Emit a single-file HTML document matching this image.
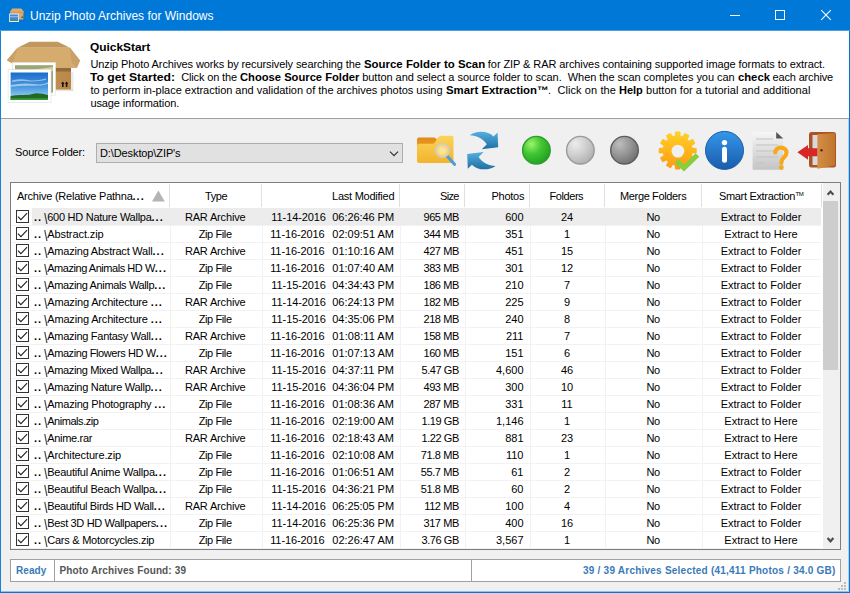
<!DOCTYPE html>
<html><head><meta charset="utf-8"><title>Unzip Photo Archives for Windows</title>
<style>
*{box-sizing:border-box;margin:0;padding:0}
html,body{width:850px;height:593px;overflow:hidden;background:#f0f0f0}
body{position:relative;font-family:"Liberation Sans","DejaVu Sans",sans-serif;font-size:11px;color:#000}
.abs{position:absolute}
#win{position:absolute;left:0;top:0;width:850px;height:593px;background:#f0f0f0;border-left:1px solid #1a80d6;border-right:1px solid #0078d7;border-bottom:1px solid #0078d7}
#win:after{content:"";position:absolute;right:0;top:31px;width:1px;height:561px;background:#a9d2f2}
#win:before{content:"";position:absolute;left:0;bottom:0;width:848px;height:1px;background:#8cc3ee}
#title{position:absolute;left:0;top:0;width:850px;height:31px;background:#0078d7;border-bottom:1px solid #4d9fe2}
#title .t{position:absolute;left:30px;top:9px;font-size:12px;color:#fff;white-space:pre;line-height:14px}
#qs{position:absolute;left:1px;top:31px;width:848px;height:88px;background:#fff;border-bottom:1px solid #a0a0a0}
#qs .h{position:absolute;left:89px;top:10px;font-weight:bold;font-size:11px;line-height:13px;white-space:pre}
#qs .l{position:absolute;left:89.400px;font-size:11px;line-height:13px;white-space:pre}
#qs .l span,#qs .l b{display:inline-block;white-space:pre}
#lbl{position:absolute;left:15px;top:146px;line-height:13px;white-space:pre}
#combo{position:absolute;left:96px;top:143px;width:307px;height:20px;border:1px solid #adadad;background:#e1e1e1}
#combo span{position:absolute;left:3px;top:3px;line-height:13px;white-space:pre}
#combo svg{position:absolute;left:292px;top:6.500px}
#tbl{position:absolute;left:10px;top:182px;width:831px;height:368px;border:1px solid #7b7d82;background:#fff}
#hdr{position:absolute;left:11px;top:183px;width:810px;height:25px;background:#fff}
#hdr span{position:absolute;top:7px;line-height:13px;white-space:pre}
#hdr i{position:absolute;top:1px;width:1px;height:23px;background:#e0e0e0}
#hdr u{position:absolute;top:25px;width:1px;height:340px;background:#f2f2f2}
.row{position:absolute;left:11px;width:810px;height:17px;white-space:pre;line-height:13px}
.row:after{content:"";position:absolute;left:0;top:17px;width:810px;height:1px;background:#f2f2f2}
.row.sel:before{content:"";position:absolute;left:21px;top:0;width:789px;height:17px;background:#ececec}
.row>span{position:absolute;top:3px}
.row span span{display:inline-block;white-space:pre}
.row .d{letter-spacing:1px;font-weight:bold}
.row .bs{width:5.100px;text-align:right;transform:translateY(0.8px) scaleY(1.4);transform-origin:50% 5.5px}
.cb{position:absolute;left:5px;top:2px;width:13px;height:13px;border:1px solid #333;background:#fff}
.cb svg{position:absolute;left:-1px;top:-1px;width:13px;height:13px}
.cb path{fill:none;stroke:#222;stroke-width:1.1}
.c1{left:23px}
.c2{left:158.700px;width:91px;text-align:center}
.c3a{right:495.200px;letter-spacing:-0.1px}
.c3b{right:427px}
.c4{right:362.200px;letter-spacing:-0.43px}
.c5{right:297.500px}
.c6{left:519px;width:74px;text-align:center}
.c7{left:593.700px;width:97px;text-align:center;letter-spacing:-0.4px}
.c8{left:690.500px;width:119px;text-align:center}
#sb{position:absolute;left:823px;top:183px;width:17px;height:366px;background:#f0f0f0}
#sb .th{position:absolute;left:0;top:18px;width:15px;height:169px;background:#cdcdcd}
#st{position:absolute;left:10px;top:559px;width:831px;height:23px;border:1px solid #a0a0a0;background:#fff}
#st span{position:absolute;top:5px;font-weight:bold;font-size:10px;line-height:12px;white-space:pre}
#st i{position:absolute;top:0;width:1px;height:21px;background:#a0a0a0}
</style></head><body>
<div id="win"></div>
<div id="title"><span class="t" style="letter-spacing:0.002px">Unzip Photo Archives for Windows</span>
<svg class="abs" style="left:716px;top:0" width="134" height="31" viewBox="0 0 134 31"><g stroke="#fff" stroke-width="1" fill="none" shape-rendering="crispEdges"><path d="M14 15.500H24"/><rect x="59.500" y="10.500" width="9" height="9"/></g><g stroke="#fff" stroke-width="1.100" fill="none"><path d="M105.200 10.200L114.800 19.800M114.800 10.200L105.200 19.800"/></g></svg>
</div>
<div id="qs">
<b class="h" style="width:60.2px;transform:scaleX(1.0819);transform-origin:0 0;">QuickStart</b>
<div class="l" style="top:27px"><span style="letter-spacing:-0.098px">Unzip Photo Archives works by recursively searching the </span><b style="width:121.2px;transform:scaleX(1.0381);transform-origin:0 0;">Source Folder to Scan</b><span style="letter-spacing:-0.081px"> for ZIP &amp; RAR archives containing supported image formats to extract.</span></div>
<div class="l" style="top:40px"><b style="width:85.0px;transform:scaleX(1.1068);transform-origin:0 0;">To get Started:</b><span style="letter-spacing:-0.149px">  Click on the </span><b style="width:119.4px;transform:scaleX(1.0174);transform-origin:0 0;">Choose Source Folder</b><span style="letter-spacing:-0.040px"> button and select a source folder to scan.  When the scan completes you can </span><b style="width:31.9px;transform:scaleX(1.0223);transform-origin:0 0;">check</b><span style="letter-spacing:-0.149px"> each archive</span></div>
<div class="l" style="top:53px"><span style="letter-spacing:-0.017px">to perform in-place extraction and validation of the archives photos using </span><b style="width:102.4px;transform:scaleX(1.0340);transform-origin:0 0;">Smart Extraction™</b><span style="letter-spacing:0.087px">.  Click on the </span><b style="width:23.8px;transform:scaleX(0.9982);transform-origin:0 0;">Help</b><span style="letter-spacing:0.031px"> button for a tutorial and additional</span></div>
<div class="l" style="top:66px"><span style="letter-spacing:-0.094px">usage information.</span></div>
</div>
<span id="lbl" style="letter-spacing:-0.154px">Source Folder:</span>
<div id="combo"><span style="letter-spacing:-0.105px">D:\Desktop\ZIP's</span><svg width="10" height="6" viewBox="0 0 10 6"><path d="M1 0.700L5 4.700L9 0.700" fill="none" stroke="#333" stroke-width="1.200"/></svg></div>
<div id="tbl"></div>
<div id="hdr">
<span style="letter-spacing:-0.231px;left:6px">Archive (Relative Pathna<span style="position:static;letter-spacing:1px;font-weight:bold">...</span></span>
<svg class="abs" style="left:141px;top:7px" width="13" height="12" viewBox="0 0 13 12"><path d="M0 11.500L6.400 0.500L12.800 11.500Z" fill="#b4b4b4"/></svg>
<span style="letter-spacing:-0.390px;left:194px">Type</span>
<span style="letter-spacing:-0.241px;left:321px">Last Modified</span>
<span style="letter-spacing:-0.702px;left:429px">Size</span>
<span style="letter-spacing:-0.258px;left:480.500px">Photos</span>
<span style="letter-spacing:-0.427px;left:538.500px">Folders</span>
<span style="letter-spacing:-0.356px;left:609px">Merge Folders</span>
<span style="letter-spacing:-0.332px;left:708px">Smart Extraction</span><span style="left:784.500px;top:5px;font-size:6px;letter-spacing:-0.3px">TM</span>
<i style="left:158px"></i><i style="left:250px"></i><i style="left:388px"></i><i style="left:453px"></i><i style="left:518px"></i><i style="left:593px"></i><i style="left:690px"></i><i style="left:810px"></i>
<u style="left:159px"></u><u style="left:251px"></u><u style="left:389px"></u><u style="left:454px"></u><u style="left:519px"></u><u style="left:594px"></u><u style="left:691px"></u>
</div>
<div class="row sel" style="top:208px"><i class="cb"><svg viewBox="0 0 13 13"><path d="M1.9 6.6L4.9 9.6L11.1 3.2"/></svg></i><span class="c1"><span class="d">..</span><span class="bs">\</span><span style="letter-spacing:-0.267px">600 HD Nature Wallpa</span><span class="d">...</span></span><span class="c2"><span style="letter-spacing:-0.160px">RAR Archive</span></span><span class="c3a">11-14-2016</span><span class="c3b"><span style="letter-spacing:-0.061px">06:26:46 PM</span></span><span class="c4">965 MB</span><span class="c5">600</span><span class="c6">24</span><span class="c7">No</span><span class="c8">Extract to Folder</span></div>
<div class="row" style="top:225px"><i class="cb"><svg viewBox="0 0 13 13"><path d="M1.9 6.6L4.9 9.6L11.1 3.2"/></svg></i><span class="c1"><span class="d">..</span><span class="bs">\</span><span style="letter-spacing:-0.089px">Abstract.zip</span></span><span class="c2"><span style="letter-spacing:-0.395px">Zip File</span></span><span class="c3a" style="margin-right:1.2px">11-16-2016</span><span class="c3b"><span style="letter-spacing:-0.007px">02:09:51 AM</span></span><span class="c4">344 MB</span><span class="c5">351</span><span class="c6">1</span><span class="c7">No</span><span class="c8">Extract to Here</span></div>
<div class="row" style="top:242px"><i class="cb"><svg viewBox="0 0 13 13"><path d="M1.9 6.6L4.9 9.6L11.1 3.2"/></svg></i><span class="c1"><span class="d">..</span><span class="bs">\</span><span style="letter-spacing:-0.207px">Amazing Abstract Wall</span><span class="d">...</span></span><span class="c2"><span style="letter-spacing:-0.160px">RAR Archive</span></span><span class="c3a" style="margin-right:1.2px">11-16-2016</span><span class="c3b"><span style="letter-spacing:-0.007px">01:10:16 AM</span></span><span class="c4">427 MB</span><span class="c5">451</span><span class="c6">15</span><span class="c7">No</span><span class="c8">Extract to Folder</span></div>
<div class="row" style="top:259px"><i class="cb"><svg viewBox="0 0 13 13"><path d="M1.9 6.6L4.9 9.6L11.1 3.2"/></svg></i><span class="c1"><span class="d">..</span><span class="bs">\</span><span style="letter-spacing:-0.458px">Amazing Animals HD W</span><span class="d">...</span></span><span class="c2"><span style="letter-spacing:-0.395px">Zip File</span></span><span class="c3a" style="margin-right:1.2px">11-16-2016</span><span class="c3b"><span style="letter-spacing:-0.007px">01:07:40 AM</span></span><span class="c4">383 MB</span><span class="c5">301</span><span class="c6">12</span><span class="c7">No</span><span class="c8">Extract to Folder</span></div>
<div class="row" style="top:276px"><i class="cb"><svg viewBox="0 0 13 13"><path d="M1.9 6.6L4.9 9.6L11.1 3.2"/></svg></i><span class="c1"><span class="d">..</span><span class="bs">\</span><span style="letter-spacing:-0.359px">Amazing Animals Wallp</span><span class="d">...</span></span><span class="c2"><span style="letter-spacing:-0.395px">Zip File</span></span><span class="c3a">11-15-2016</span><span class="c3b"><span style="letter-spacing:-0.061px">04:34:43 PM</span></span><span class="c4">186 MB</span><span class="c5">210</span><span class="c6">7</span><span class="c7">No</span><span class="c8">Extract to Folder</span></div>
<div class="row" style="top:293px"><i class="cb"><svg viewBox="0 0 13 13"><path d="M1.9 6.6L4.9 9.6L11.1 3.2"/></svg></i><span class="c1"><span class="d">..</span><span class="bs">\</span><span style="letter-spacing:-0.167px">Amazing Architecture </span><span class="d">...</span></span><span class="c2"><span style="letter-spacing:-0.160px">RAR Archive</span></span><span class="c3a">11-14-2016</span><span class="c3b"><span style="letter-spacing:-0.061px">06:24:13 PM</span></span><span class="c4">182 MB</span><span class="c5">225</span><span class="c6">9</span><span class="c7">No</span><span class="c8">Extract to Folder</span></div>
<div class="row" style="top:310px"><i class="cb"><svg viewBox="0 0 13 13"><path d="M1.9 6.6L4.9 9.6L11.1 3.2"/></svg></i><span class="c1"><span class="d">..</span><span class="bs">\</span><span style="letter-spacing:-0.167px">Amazing Architecture </span><span class="d">...</span></span><span class="c2"><span style="letter-spacing:-0.395px">Zip File</span></span><span class="c3a">11-15-2016</span><span class="c3b"><span style="letter-spacing:-0.061px">04:35:06 PM</span></span><span class="c4">218 MB</span><span class="c5">240</span><span class="c6">8</span><span class="c7">No</span><span class="c8">Extract to Folder</span></div>
<div class="row" style="top:327px"><i class="cb"><svg viewBox="0 0 13 13"><path d="M1.9 6.6L4.9 9.6L11.1 3.2"/></svg></i><span class="c1"><span class="d">..</span><span class="bs">\</span><span style="letter-spacing:-0.277px">Amazing Fantasy Wall</span><span class="d">...</span></span><span class="c2"><span style="letter-spacing:-0.160px">RAR Archive</span></span><span class="c3a" style="margin-right:1.2px">11-16-2016</span><span class="c3b"><span style="letter-spacing:0.068px">01:08:11 AM</span></span><span class="c4">158 MB</span><span class="c5">211</span><span class="c6">7</span><span class="c7">No</span><span class="c8">Extract to Folder</span></div>
<div class="row" style="top:344px"><i class="cb"><svg viewBox="0 0 13 13"><path d="M1.9 6.6L4.9 9.6L11.1 3.2"/></svg></i><span class="c1"><span class="d">..</span><span class="bs">\</span><span style="letter-spacing:-0.417px">Amazing Flowers HD W</span><span class="d">...</span></span><span class="c2"><span style="letter-spacing:-0.395px">Zip File</span></span><span class="c3a" style="margin-right:1.2px">11-16-2016</span><span class="c3b"><span style="letter-spacing:-0.007px">01:07:13 AM</span></span><span class="c4">160 MB</span><span class="c5">151</span><span class="c6">6</span><span class="c7">No</span><span class="c8">Extract to Folder</span></div>
<div class="row" style="top:361px"><i class="cb"><svg viewBox="0 0 13 13"><path d="M1.9 6.6L4.9 9.6L11.1 3.2"/></svg></i><span class="c1"><span class="d">..</span><span class="bs">\</span><span style="letter-spacing:-0.358px">Amazing Mixed Wallpa</span><span class="d">...</span></span><span class="c2"><span style="letter-spacing:-0.160px">RAR Archive</span></span><span class="c3a">11-15-2016</span><span class="c3b"><span style="letter-spacing:0.013px">04:37:11 PM</span></span><span class="c4">5.47 GB</span><span class="c5">4,600</span><span class="c6">46</span><span class="c7">No</span><span class="c8">Extract to Folder</span></div>
<div class="row" style="top:378px"><i class="cb"><svg viewBox="0 0 13 13"><path d="M1.9 6.6L4.9 9.6L11.1 3.2"/></svg></i><span class="c1"><span class="d">..</span><span class="bs">\</span><span style="letter-spacing:-0.287px">Amazing Nature Wallp</span><span class="d">...</span></span><span class="c2"><span style="letter-spacing:-0.160px">RAR Archive</span></span><span class="c3a">11-15-2016</span><span class="c3b"><span style="letter-spacing:-0.061px">04:36:04 PM</span></span><span class="c4">493 MB</span><span class="c5">300</span><span class="c6">10</span><span class="c7">No</span><span class="c8">Extract to Folder</span></div>
<div class="row" style="top:395px"><i class="cb"><svg viewBox="0 0 13 13"><path d="M1.9 6.6L4.9 9.6L11.1 3.2"/></svg></i><span class="c1"><span class="d">..</span><span class="bs">\</span><span style="letter-spacing:-0.215px">Amazing Photography </span><span class="d">...</span></span><span class="c2"><span style="letter-spacing:-0.395px">Zip File</span></span><span class="c3a" style="margin-right:1.2px">11-16-2016</span><span class="c3b"><span style="letter-spacing:-0.007px">01:08:36 AM</span></span><span class="c4">287 MB</span><span class="c5">331</span><span class="c6">11</span><span class="c7">No</span><span class="c8">Extract to Folder</span></div>
<div class="row" style="top:412px"><i class="cb"><svg viewBox="0 0 13 13"><path d="M1.9 6.6L4.9 9.6L11.1 3.2"/></svg></i><span class="c1"><span class="d">..</span><span class="bs">\</span><span style="letter-spacing:-0.459px">Animals.zip</span></span><span class="c2"><span style="letter-spacing:-0.395px">Zip File</span></span><span class="c3a" style="margin-right:1.2px">11-16-2016</span><span class="c3b"><span style="letter-spacing:-0.007px">02:19:00 AM</span></span><span class="c4">1.19 GB</span><span class="c5">1,146</span><span class="c6">1</span><span class="c7">No</span><span class="c8">Extract to Here</span></div>
<div class="row" style="top:429px"><i class="cb"><svg viewBox="0 0 13 13"><path d="M1.9 6.6L4.9 9.6L11.1 3.2"/></svg></i><span class="c1"><span class="d">..</span><span class="bs">\</span><span style="letter-spacing:-0.310px">Anime.rar</span></span><span class="c2"><span style="letter-spacing:-0.160px">RAR Archive</span></span><span class="c3a" style="margin-right:1.2px">11-16-2016</span><span class="c3b"><span style="letter-spacing:-0.007px">02:18:43 AM</span></span><span class="c4">1.22 GB</span><span class="c5">881</span><span class="c6">23</span><span class="c7">No</span><span class="c8">Extract to Here</span></div>
<div class="row" style="top:446px"><i class="cb"><svg viewBox="0 0 13 13"><path d="M1.9 6.6L4.9 9.6L11.1 3.2"/></svg></i><span class="c1"><span class="d">..</span><span class="bs">\</span><span style="letter-spacing:-0.126px">Architecture.zip</span></span><span class="c2"><span style="letter-spacing:-0.395px">Zip File</span></span><span class="c3a" style="margin-right:1.2px">11-16-2016</span><span class="c3b"><span style="letter-spacing:-0.007px">02:10:08 AM</span></span><span class="c4">71.8 MB</span><span class="c5">110</span><span class="c6">1</span><span class="c7">No</span><span class="c8">Extract to Here</span></div>
<div class="row" style="top:463px"><i class="cb"><svg viewBox="0 0 13 13"><path d="M1.9 6.6L4.9 9.6L11.1 3.2"/></svg></i><span class="c1"><span class="d">..</span><span class="bs">\</span><span style="letter-spacing:-0.233px">Beautiful Anime Wallpa</span><span class="d">...</span></span><span class="c2"><span style="letter-spacing:-0.395px">Zip File</span></span><span class="c3a" style="margin-right:1.2px">11-16-2016</span><span class="c3b"><span style="letter-spacing:-0.007px">01:06:51 AM</span></span><span class="c4">55.7 MB</span><span class="c5">61</span><span class="c6">2</span><span class="c7">No</span><span class="c8">Extract to Folder</span></div>
<div class="row" style="top:480px"><i class="cb"><svg viewBox="0 0 13 13"><path d="M1.9 6.6L4.9 9.6L11.1 3.2"/></svg></i><span class="c1"><span class="d">..</span><span class="bs">\</span><span style="letter-spacing:-0.260px">Beautiful Beach Wallpa</span><span class="d">...</span></span><span class="c2"><span style="letter-spacing:-0.395px">Zip File</span></span><span class="c3a">11-15-2016</span><span class="c3b"><span style="letter-spacing:-0.061px">04:36:21 PM</span></span><span class="c4">51.8 MB</span><span class="c5">60</span><span class="c6">2</span><span class="c7">No</span><span class="c8">Extract to Folder</span></div>
<div class="row" style="top:497px"><i class="cb"><svg viewBox="0 0 13 13"><path d="M1.9 6.6L4.9 9.6L11.1 3.2"/></svg></i><span class="c1"><span class="d">..</span><span class="bs">\</span><span style="letter-spacing:-0.326px">Beautiful Birds HD Wall</span><span class="d">...</span></span><span class="c2"><span style="letter-spacing:-0.160px">RAR Archive</span></span><span class="c3a">11-14-2016</span><span class="c3b"><span style="letter-spacing:-0.061px">06:25:05 PM</span></span><span class="c4">112 MB</span><span class="c5">100</span><span class="c6">4</span><span class="c7">No</span><span class="c8">Extract to Folder</span></div>
<div class="row" style="top:514px"><i class="cb"><svg viewBox="0 0 13 13"><path d="M1.9 6.6L4.9 9.6L11.1 3.2"/></svg></i><span class="c1"><span class="d">..</span><span class="bs">\</span><span style="letter-spacing:-0.340px">Best 3D HD Wallpapers</span><span class="d">...</span></span><span class="c2"><span style="letter-spacing:-0.395px">Zip File</span></span><span class="c3a">11-14-2016</span><span class="c3b"><span style="letter-spacing:-0.061px">06:25:36 PM</span></span><span class="c4">317 MB</span><span class="c5">400</span><span class="c6">16</span><span class="c7">No</span><span class="c8">Extract to Folder</span></div>
<div class="row" style="top:531px"><i class="cb"><svg viewBox="0 0 13 13"><path d="M1.9 6.6L4.9 9.6L11.1 3.2"/></svg></i><span class="c1"><span class="d">..</span><span class="bs">\</span><span style="letter-spacing:-0.249px">Cars &amp; Motorcycles.zip</span></span><span class="c2"><span style="letter-spacing:-0.395px">Zip File</span></span><span class="c3a" style="margin-right:1.2px">11-16-2016</span><span class="c3b"><span style="letter-spacing:-0.007px">02:26:47 AM</span></span><span class="c4">3.76 GB</span><span class="c5">3,567</span><span class="c6">1</span><span class="c7">No</span><span class="c8">Extract to Here</span></div>
<div id="sb"><div class="th"></div>
<svg class="abs" style="left:0;top:0" width="17" height="366" viewBox="0 0 17 366"><g fill="none" stroke="#4d4d4d" stroke-width="2.200"><path d="M4.600 11.700L7.500 8.600L10.400 11.700"/><path d="M4.600 355L7.500 358.300L10.400 355"/></g></svg>
</div>
<div id="st"><span style="letter-spacing:0.077px;left:5px;color:#3a7ab8">Ready</span><span style="letter-spacing:0.128px;left:48.500px;color:#555">Photo Archives Found: 39</span><span style="letter-spacing:0.230px;left:572px;color:#3a7ab8">39 / 39 Archives Selected (41,411 Photos / 34.0 GB)</span><i style="left:43px"></i><i style="left:460px"></i></div>
<svg class="abs" style="left:838px;top:582px" width="8" height="8" viewBox="0 0 8 8" shape-rendering="crispEdges"><g fill="#bcbcbc"><rect x="6" y="0" width="2" height="2"/><rect x="3" y="3" width="2" height="2"/><rect x="6" y="3" width="2" height="2"/><rect x="0" y="6" width="2" height="2"/><rect x="3" y="6" width="2" height="2"/><rect x="6" y="6" width="2" height="2"/></g></svg>
<svg class="abs" style="left:0;top:0;pointer-events:none" width="850" height="593" viewBox="0 0 850 593">
<defs>
<linearGradient id="gFold" x1="0" y1="0" x2="0" y2="1"><stop offset="0" stop-color="#fbd45c"/><stop offset="1" stop-color="#f3b32a"/></linearGradient>
<linearGradient id="gBack" x1="0" y1="0" x2="0" y2="1"><stop offset="0" stop-color="#e08a16"/><stop offset="1" stop-color="#f2a62c"/></linearGradient>
<linearGradient id="gBlue" x1="0" y1="0" x2="0" y2="1"><stop offset="0" stop-color="#56aee0"/><stop offset="1" stop-color="#1f6fa2"/></linearGradient>
<radialGradient id="gGreen" cx="0.32" cy="0.28" r="0.8"><stop offset="0" stop-color="#9cf56a"/><stop offset="0.45" stop-color="#43c634"/><stop offset="1" stop-color="#1f9e22"/></radialGradient>
<radialGradient id="gLG" cx="0.32" cy="0.28" r="0.8"><stop offset="0" stop-color="#ececec"/><stop offset="0.5" stop-color="#cfcfcf"/><stop offset="1" stop-color="#adadad"/></radialGradient>
<radialGradient id="gDG" cx="0.32" cy="0.28" r="0.8"><stop offset="0" stop-color="#bdbdbd"/><stop offset="0.5" stop-color="#969696"/><stop offset="1" stop-color="#6e6e6e"/></radialGradient>
<linearGradient id="gGear" x1="0" y1="0" x2="0" y2="1"><stop offset="0" stop-color="#ffd026"/><stop offset="1" stop-color="#ff9a12"/></linearGradient>
<linearGradient id="gInfo" x1="0" y1="0" x2="0" y2="1"><stop offset="0" stop-color="#3496ea"/><stop offset="1" stop-color="#1a5cab"/></linearGradient>
<linearGradient id="gDoc" x1="0" y1="0" x2="0" y2="1"><stop offset="0" stop-color="#f6f6f6"/><stop offset="1" stop-color="#c4c4c4"/></linearGradient>
<linearGradient id="gDoor" x1="0" y1="0" x2="1" y2="0"><stop offset="0" stop-color="#d38f48"/><stop offset="1" stop-color="#c0752c"/></linearGradient>
<linearGradient id="gSky" x1="0" y1="0" x2="0" y2="1"><stop offset="0" stop-color="#1a6ccc"/><stop offset="0.55" stop-color="#4c9be0"/><stop offset="0.85" stop-color="#8cc4ee"/><stop offset="1" stop-color="#b9dcf5"/></linearGradient>
<linearGradient id="gBox" x1="0" y1="0" x2="1" y2="0"><stop offset="0" stop-color="#d0a266"/><stop offset="1" stop-color="#b98748"/></linearGradient>
</defs>

<!-- logo box -->
<path d="M29.700 41.700h28l12.300 6h-52.500z" fill="#c1975c"/>
<path d="M17.500 47.700h52.500l10 12.800l-3.200 7.500h-64.300v-4.600l-5.600-3.200z" fill="#d5ab6e"/>
<path d="M17.500 47.700l-10.600 12.500l5.600 3.200l2-6.700z" fill="#c9a066"/>
<path d="M70 47.700l10 12.800l-3.200 7.500l-5.300-6z" fill="#c9a066"/>
<rect x="71" y="72" width="2.500" height="18.500" fill="#000" opacity="0.080"/><rect x="56" y="89.600" width="17" height="1.500" fill="#000" opacity="0.100"/><rect x="12.500" y="68" width="58.500" height="21.600" fill="url(#gBox)"/>
<rect x="12.500" y="68" width="58.500" height="3.500" fill="#8f6c3a"/>
<path d="M62 87v-3.200h-1l1.800-2.400l1.800 2.400h-1v3.200zM65.800 87v-3.200h-1l1.800-2.400l1.800 2.400h-1v3.200z" fill="#1a1208"/>
<rect x="12.500" y="62.500" width="43.100" height="32.700" fill="#fff" stroke="#e4e4e4" stroke-width="0.600"/>
<rect x="15" y="65.200" width="38" height="27.500" fill="#9aa678"/>
<path d="M15 72l38-5v4l-38 8z" fill="#dccb9c"/>
<rect x="8.100" y="69.600" width="42.900" height="33.100" fill="#fff" stroke="#dedede" stroke-width="0.600"/>
<rect x="10.600" y="72.500" width="37.400" height="27.500" fill="url(#gSky)"/>
<path d="M12 80.500q8-2 16-0.500t18-1.500v1.500q-10 2-18 1.200t-16 0.800z" fill="#e6f1fa" opacity="0.550"/>
<path d="M11 85q12-2.500 22-1t15-1.800v1.800q-8 2.200-16 1.800t-21 1z" fill="#d8eaf8" opacity="0.600"/>
<path d="M10.600 96q6-1.200 12-1t12-1.600q7-0.300 13.400 1.600v5h-37.400z" fill="#1f6a24"/>
<path d="M10.600 98.200h37.400v1.800h-37.400z" fill="#3d9a3a"/>
<!-- title icon -->
<path d="M12.300 8.600h9l2.400 3v1.600h-0.400v6.300h-12.800v-6.300h-0.400v-1.600z" fill="#dcab6b"/>
<path d="M10.100 11.800h13.600v1.400h-13.600z" fill="#cf9a58"/>
<rect x="21.600" y="16.600" width="1.200" height="1.200" fill="#2a1a08"/>
<rect x="9" y="13.600" width="10" height="8.400" rx="0.500" fill="#dfeaf6"/>
<rect x="9.900" y="14.500" width="8.200" height="5.600" fill="#4588d8"/>
<rect x="9.900" y="16.200" width="8.200" height="1" fill="#9cc3ec"/>
<rect x="9.900" y="19.800" width="8.200" height="1.100" fill="#3a8a3a"/>
<!-- folder search -->
<path d="M417 139.5q0-2 2-2h15q1.5 0 2.5 1.5l2 3.5v10h-21.500z" fill="url(#gBack)"/>
<path d="M417 145.800q0-2 2-2h13.500q1.500 0 2.500-1.500l3.200-5q1-1.500 2.800-1.500h10.500q2 0 2 2v23.200q0 2-2 2h-32.500q-2 0-2-2z" fill="url(#gFold)"/>
<path d="M447.500 156.500L454.500 164.300" stroke="#4a9fd6" stroke-width="3.200" stroke-linecap="round"/>
<circle cx="442.400" cy="150.500" r="6.600" fill="#f9d977" stroke="#cfcdc4" stroke-width="1.800"/>
<circle cx="442.400" cy="150.500" r="3.500" fill="#fbe39a"/>
<!-- refresh -->
<g fill="url(#gBlue)">
<path d="M469.800 135.300C476 130.500 488 130.500 493.500 136.500L497.600 132.400L498.200 147.300L481.800 149.200L486.800 144.200C483 138.500 477 135.500 469.800 135.300Z"/>
<path d="M495.600 165.900C489.400 170.700 477.400 170.700 471.900 164.700L467.800 168.800L467.200 153.900L483.600 152L478.600 157C482.400 162.700 488.400 165.700 495.600 165.900Z"/>
</g>
<!-- circles -->
<circle cx="536.400" cy="150.200" r="13.800" fill="url(#gGreen)" stroke="#2a9d28" stroke-width="1.400"/>
<circle cx="580.400" cy="150.200" r="13.800" fill="url(#gLG)" stroke="#9a9a9a" stroke-width="1.400"/>
<circle cx="624.500" cy="150.200" r="13.800" fill="url(#gDG)" stroke="#5c5c5c" stroke-width="1.400"/>
<!-- gear -->
<path d="M691.7 148.4L695.9 148.7L695.9 152.5L691.7 152.8L691.0 155.7L694.4 158.0L692.5 161.4L688.7 159.5L686.6 161.6L688.5 165.4L685.1 167.3L682.8 163.9L679.9 164.6L679.6 168.8L675.8 168.8L675.5 164.6L672.6 163.9L670.3 167.3L666.9 165.4L668.8 161.6L666.7 159.5L662.9 161.4L661.0 158.0L664.4 155.7L663.7 152.8L659.5 152.5L659.5 148.7L663.7 148.4L664.4 145.5L661.0 143.2L662.9 139.8L666.7 141.7L668.8 139.6L666.9 135.8L670.3 133.9L672.6 137.3L675.5 136.6L675.8 132.4L679.6 132.4L679.9 136.6L682.8 137.3L685.1 133.9L688.5 135.8L686.6 139.6L688.7 141.7L692.5 139.8L694.4 143.2L691.0 145.5ZM685.1 151.1a7.2 7.2 0 1 0 -14.4 0a7.2 7.2 0 1 0 14.4 0Z" fill="url(#gGear)" fill-rule="evenodd" stroke="url(#gGear)" stroke-width="1.6" stroke-linejoin="round"/>
<path d="M676.500 160.800L684 168L697.500 155" fill="none" stroke="#86ce3c" stroke-width="5.200"/>
<!-- info -->
<circle cx="724.500" cy="150.400" r="19" fill="url(#gInfo)" stroke="#1c5ea8" stroke-width="1"/>
<circle cx="724.500" cy="142.600" r="2.700" fill="#fff"/>
<rect x="722" y="146.800" width="5" height="16" rx="2.500" fill="#fff"/>
<!-- doc help -->
<path d="M752.600 132h23.600l7 6.500v31.200h-30.600z" fill="url(#gDoc)"/>
<path d="M776.200 132l7 6.500h-7z" fill="#555"/>
<g stroke="#c2c2c2" stroke-width="1.200"><path d="M756 139h17M756 145h22M756 151h22M756 157h22M756 163h8.500"/></g>
<path d="M775.300 152.500c0-6.500 11.200-6.500 11.200 0.200c0 4.500-5.200 4.800-5.200 10" fill="none" stroke="#f6a91c" stroke-width="4.200" stroke-linecap="round"/>
<circle cx="781.300" cy="167.400" r="2.400" fill="#f6a91c"/>
<!-- exit door -->
<rect x="809" y="132" width="27" height="35.500" rx="2.500" fill="#a95326"/>
<rect x="812.500" y="135" width="6" height="30" fill="#d9d9d9"/>
<path d="M817.400 134.200L835 133v32.400l-17.600 3.400z" fill="url(#gDoor)"/>
<circle cx="821.500" cy="150.300" r="1.200" fill="#4a2a10"/>
<path d="M797.400 152.300L808 145v3.300h9.400v8h-9.400v3.500z" fill="#d82626"/>
</svg>

</body></html>
